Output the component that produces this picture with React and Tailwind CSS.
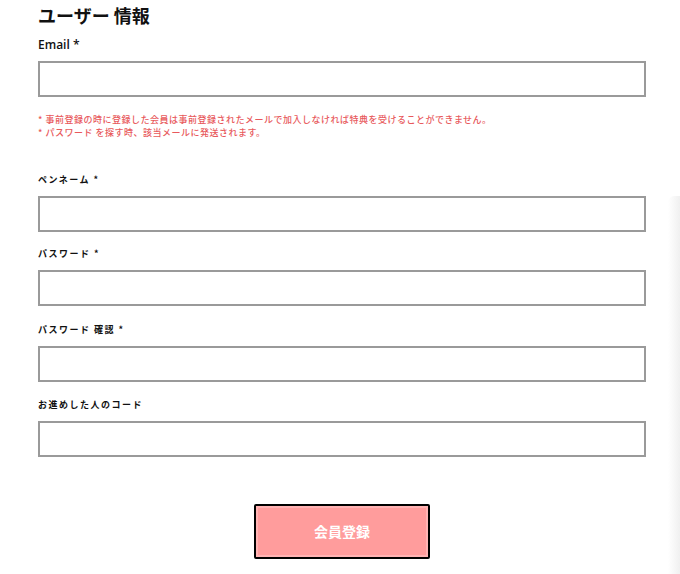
import React from "react";

const jp = { fontFamily: '"Noto Sans CJK JP", "Noto Sans", sans-serif' };

function Field({ label, mt }) {
  return (
    <div className={mt}>
      <div className="text-[9px] leading-[12px] font-bold tracking-[1.5px] text-[#111]" style={jp}>
        {label}
      </div>
      <div className="mt-[10px] h-[36px] w-[608px] border-2 border-[#9a9a9a] bg-white" />
    </div>
  );
}

export default function App() {
  return (
    <div className="relative min-h-[574px] w-[680px] overflow-hidden bg-white" style={jp}>
      <div className="pointer-events-none absolute right-0 top-[196px] h-[400px] w-[12px] rounded-tl-[6px] bg-gradient-to-l from-[#f0f0f0] to-transparent" />
      <div className="pl-[38px] pt-[4px]">
        <h1 className="text-[18px] leading-[22px] font-bold text-[#111]">ユーザー 情報</h1>
        <div
          className="mt-[11px] text-[12px] leading-[16px] font-semibold text-[#111]"
          style={{ fontFamily: '"Open Sans", "Noto Sans", sans-serif' }}
        >
          Email *
        </div>
        <div className="mt-[8px] h-[36px] w-[608px] border-2 border-[#9a9a9a] bg-white" />
        <div className="mt-[16px] text-[9px] leading-[13px] tracking-[0.5px] font-medium text-[#e8595c]">
          <div>* 事前登録の時に登録した会員は事前登録されたメールで加入しなければ特典を受けることができません。</div>
          <div>* パスワード を探す時、該当メールに発送されます。</div>
        </div>
        <Field label="ペンネーム *" mt="mt-[35px]" />
        <Field label="パスワード *" mt="mt-[16px]" />
        <Field label="パスワード 確認 *" mt="mt-[18px]" />
        <Field label="お進めした人のコード" mt="mt-[17px]" />
        <div className="flex w-[608px] justify-center">
          <button className="mt-[47px] flex h-[55px] w-[176px] items-center justify-center rounded-[2px] border-2 border-black bg-[#ff9c9c] text-[14px] font-bold text-white shadow-[inset_0_0_0_2px_#ffb3b3]">
            会員登録
          </button>
        </div>
      </div>
    </div>
  );
}
